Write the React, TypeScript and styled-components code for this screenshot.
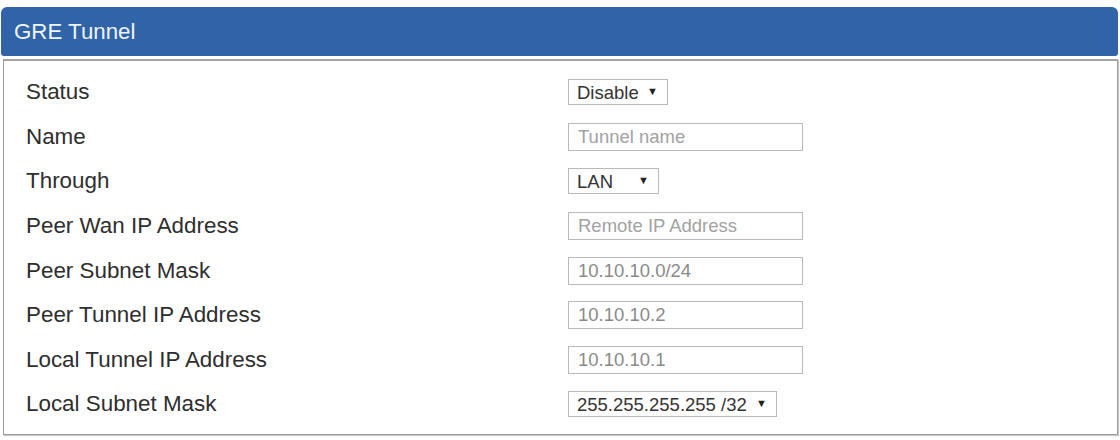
import React from "react";
import styled, { createGlobalStyle } from "styled-components";

const GlobalStyle = createGlobalStyle`
  html, body {
    margin: 0;
    padding: 0;
    background: #ffffff;
    font-family: "Liberation Sans", Arial, sans-serif;
  }
`;

const Page = styled.div`
  width: 1120px;
  height: 440px;
  box-sizing: border-box;
  padding: 7px 2px 0 1px;
  background: #ffffff;
`;

const Header = styled.header`
  height: 49px;
  box-sizing: border-box;
  padding-left: 13px;
  display: flex;
  align-items: center;
  background: #3063a8;
  border-radius: 6px 6px 3px 3px;
  color: #eef4fb;
  font-size: 22.3px;
`;

const Body = styled.div`
  margin: 3px 0 0 2px;
  height: 376px;
  box-sizing: border-box;
  padding: 9px 0 0 22px;
  border: 1px solid #9c9c9c;
  border-top: 2px solid #a4a4a4;
  box-shadow: 1px 1px 1px #c8c8c8;
`;

const Row = styled.div`
  height: 44.6px;
  display: grid;
  grid-template-columns: 542px 1fr;
  align-items: center;
`;

const Label = styled.span`
  font-size: 22.4px;
  color: #2e2e2e;
`;

const TextInput = styled.input`
  width: 235px;
  height: 28px;
  box-sizing: border-box;
  padding: 0 9px;
  border: 1px solid #b9b9b9;
  font-family: "Liberation Sans", Arial, sans-serif;
  font-size: 18.5px;
  color: #8a8a8a;
  background: #ffffff;
  outline: none;

  &::placeholder {
    color: #a2a2a2;
  }
`;

const SelectBox = styled.div<{ $w: number }>`
  position: relative;
  width: ${(p) => p.$w}px;
  height: 26px;

  &::after {
    content: "▼";
    position: absolute;
    right: 10px;
    top: 7px;
    font-size: 11px;
    line-height: 1;
    color: #222222;
    pointer-events: none;
  }
`;

const Select = styled.select`
  appearance: none;
  width: 100%;
  height: 100%;
  box-sizing: border-box;
  padding: 0 0 0 8px;
  border: 1px solid #b9b9b9;
  border-radius: 0;
  background: #ffffff;
  font-family: "Liberation Sans", Arial, sans-serif;
  font-size: 18.5px;
  color: #333333;
  outline: none;
`;

type Field =
  | { label: string; kind: "select"; width: number; options: string[] }
  | { label: string; kind: "input"; value?: string; placeholder?: string };

const fields: Field[] = [
  { label: "Status", kind: "select", width: 100, options: ["Disable", "Enable"] },
  { label: "Name", kind: "input", placeholder: "Tunnel name" },
  { label: "Through", kind: "select", width: 91, options: ["LAN", "WAN"] },
  { label: "Peer Wan IP Address", kind: "input", placeholder: "Remote IP Address" },
  { label: "Peer Subnet Mask", kind: "input", value: "10.10.10.0/24" },
  { label: "Peer Tunnel IP Address", kind: "input", value: "10.10.10.2" },
  { label: "Local Tunnel IP Address", kind: "input", value: "10.10.10.1" },
  {
    label: "Local Subnet Mask",
    kind: "select",
    width: 209,
    options: ["255.255.255.255 /32", "255.255.255.0 /24"],
  },
];

export default function App() {
  return (
    <>
      <GlobalStyle />
      <Page>
        <Header>GRE Tunnel</Header>
        <Body>
          {fields.map((f) => (
            <Row key={f.label}>
              <Label>{f.label}</Label>
              <div>
                {f.kind === "select" ? (
                  <SelectBox $w={f.width}>
                    <Select defaultValue={f.options[0]}>
                      {f.options.map((o) => (
                        <option key={o}>{o}</option>
                      ))}
                    </Select>
                  </SelectBox>
                ) : (
                  <TextInput defaultValue={f.value} placeholder={f.placeholder} />
                )}
              </div>
            </Row>
          ))}
        </Body>
      </Page>
    </>
  );
}
